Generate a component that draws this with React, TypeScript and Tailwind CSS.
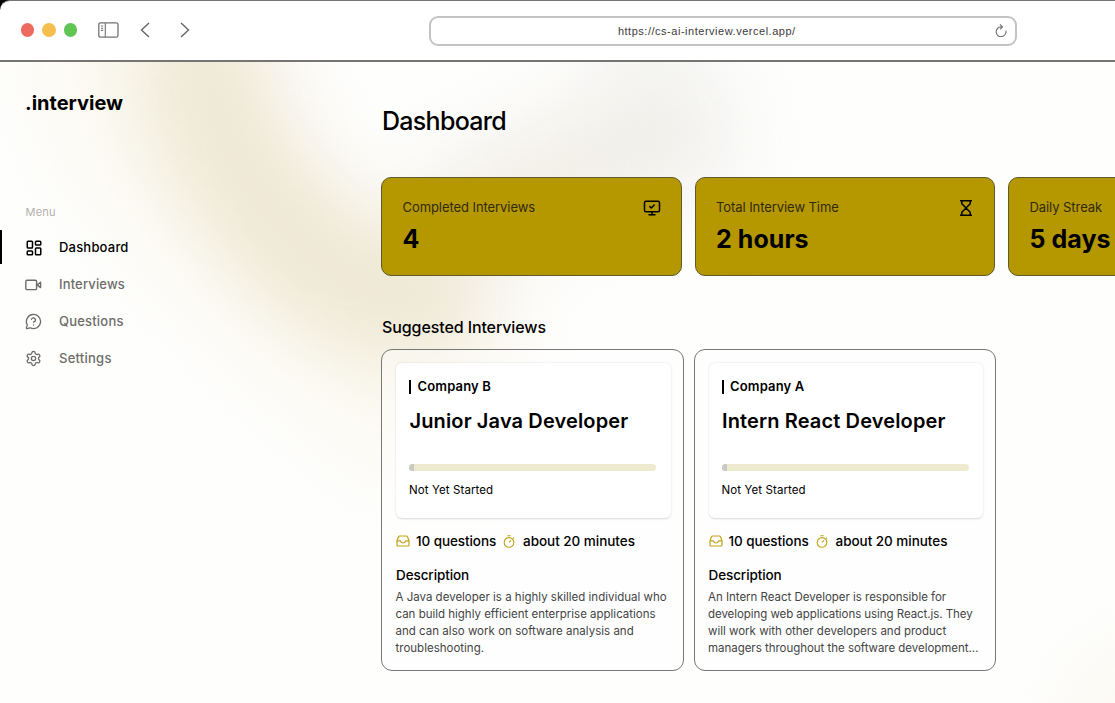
import React from "react";
import { LayoutDashboard, MessageCircleQuestionMark, Settings, MonitorCheck } from "lucide-react";

function VideoIcon() {
  return (
    <svg className="h-4 w-[17px]" viewBox="0 0 17 16" fill="none" stroke="currentColor" strokeWidth="1.4" strokeLinejoin="round">
      <rect x="0.8" y="3.2" width="10.8" height="9.4" rx="1.2" />
      <path d="M12.2 7.9 15.6 5.2v5.4z" strokeWidth="1.4" />
    </svg>
  );
}

function HourglassIcon() {
  return (
    <svg className="mr-px h-[18px] w-3.5" viewBox="0 0 14 18" fill="none" stroke="currentColor" strokeWidth="1.5">
      <path d="M1 1.7h12M1 16.3h12M2.8 1.7v3.1L7 9l4.2-4.2V1.7M2.8 16.3v-3.1L7 9l4.2 4.2v3.1" />
    </svg>
  );
}

function InboxIcon() {
  return (
    <svg className="h-3 w-3.5 text-[#c0a317]" viewBox="0 0 14 12" fill="none" stroke="currentColor" strokeWidth="1.2" strokeLinejoin="round">
      <path d="M1 5.8 2.4 2Q2.8 1 3.8 1h6.4q1 0 1.4 1L13 5.8V10q0 1-1 1H2q-1 0-1-1z" />
      <path d="M1 5.8h3.4Q5 8 7 8t2.6-2.2H13" />
    </svg>
  );
}

function TimerIcon() {
  return (
    <svg className="h-[13px] w-3 text-[#c0a317]" viewBox="0 0 12 13" fill="none" stroke="currentColor" strokeWidth="1.1">
      <circle cx="6" cy="7.4" r="4.8" />
      <path d="M4.3.8h3.4M6 7.4l2-2M10 2.6l.9.9" />
    </svg>
  );
}

function BrowserBar() {
  return (
    <div className="bg-black">
      <header className="flex h-[62px] items-center rounded-tl-[10px] border-t border-b-2 border-t-[#777] border-b-[#777573] bg-white pl-[21px]">
        <div className="flex gap-2 pb-px">
          <span className="size-[13.3px] rounded-full bg-[#ec6a5e]" />
          <span className="size-[13.3px] rounded-full bg-[#f4bf4f]" />
          <span className="size-[13.3px] rounded-full bg-[#61c554]" />
        </div>
        <svg className="mb-[2px] ml-[21.5px] h-4 w-[21px]" viewBox="0 0 21 16" fill="none" stroke="#737373" strokeWidth="1.3">
          <rect x="0.8" y="0.8" width="19.2" height="14.4" rx="1.8" />
          <path d="M7.3 1v14M3 4h2.2M3 6.2h2.2M3 8.4h2.2" strokeWidth="1.1" />
        </svg>
        <svg className="mb-[2px] ml-[21px] h-4 w-[10px]" viewBox="0 0 10 16" fill="none" stroke="#666" strokeWidth="1.4">
          <path d="M9 1 1.5 8 9 15" />
        </svg>
        <svg className="mb-[2px] ml-[29.5px] h-4 w-[10px]" viewBox="0 0 10 16" fill="none" stroke="#666" strokeWidth="1.4">
          <path d="M1 1 8.5 8 1 15" />
        </svg>
        <div className="ml-[239px] flex h-[30px] w-[588px] items-center rounded-[9px] border-2 border-[#c4c2c3] pr-2 pl-[187px] font-['Liberation_Sans',sans-serif] text-[11px] text-[#3c3c3c]">
          <span className="pt-px tracking-[0.52px]">https://cs-ai-interview.vercel.app/</span>
          <svg className="ml-auto h-[13px] w-3" viewBox="0 0 12 13" fill="none" stroke="#777" strokeWidth="1.2">
            <path d="M10.8 6.6A4.9 4.9 0 1 1 6 2.9h1.2M5 .4l2.5 2.5L5 5.4" />
          </svg>
        </div>
      </header>
    </div>
  );
}

function Backdrop() {
  return (
    <div className="pointer-events-none absolute inset-0 overflow-hidden">
      <svg className="absolute inset-0 h-[641px] w-[1115px] overflow-visible blur-[40px]" viewBox="0 0 1115 641" fill="none" strokeLinecap="round">
        <path d="M130 -20 160 60 270 180 420 320" stroke="#fbf9f0" strokeWidth="190" />
        <path d="M205 -10C215 70 245 120 290 170S385 240 430 235" stroke="#eee7d3" strokeWidth="122" />
        <path d="M470 150C550 110 620 90 680 70" stroke="#f0ede4" strokeWidth="100" />
        <path d="M640 -20 680 90" stroke="#eeeeec" strokeOpacity="0.6" strokeWidth="110" />
      </svg>
      <div className="absolute top-[590px] left-[1070px] h-[150px] w-[150px] rounded-full bg-[#faf8ef] blur-[35px]" />
    </div>
  );
}

const nav = [
  { label: "Dashboard", icon: <LayoutDashboard size={18} strokeWidth={2} />, tracking: "tracking-[0.2px]" },
  { label: "Interviews", icon: <VideoIcon />, tracking: "tracking-[0.15px]" },
  { label: "Questions", icon: <MessageCircleQuestionMark size={17} strokeWidth={1.9} />, tracking: "tracking-[0.2px]" },
  { label: "Settings", icon: <Settings size={17} strokeWidth={1.9} />, tracking: "tracking-[0.25px]" },
];

function Sidebar() {
  return (
    <aside className="w-[381px] shrink-0 pt-[29px]">
      <h1 className="pl-[25px] text-[20px] leading-6 font-bold">.interview</h1>
      <p className="mt-[89px] pl-[25.5px] text-[11px] leading-4 tracking-[0.2px] text-[#b2b1ad]">Menu</p>
      <nav className="mt-[10px] flex flex-col gap-[3px]">
        {nav.map((item, i) => (
          <a
            key={item.label}
            className={
              i === 0
                ? "flex h-[34px] items-center border-l-2 border-black pl-[23px] text-black"
                : "flex h-[34px] items-center border-l-2 border-transparent pl-[23px] text-[#6d6c69]"
            }
          >
            <span className="flex w-[34px] items-center pt-px">{item.icon}</span>
            <span className={"pt-px text-[13px] font-medium " + item.tracking}>{item.label}</span>
          </a>
        ))}
      </nav>
    </aside>
  );
}

const stats = [
  { label: "Completed Interviews", value: "4", icon: <MonitorCheck size={18} strokeWidth={2} /> },
  { label: "Total Interview Time", value: "2 hours", icon: <HourglassIcon /> },
  { label: "Daily Streak", value: "5 days", icon: null },
];

const interviews = [
  {
    company: "Company B",
    role: "Junior Java Developer",
    lines: [
      { text: "A Java developer is a highly skilled individual who", tracking: "tracking-normal" },
      { text: "can build highly efficient enterprise applications", tracking: "tracking-[-0.01px]" },
      { text: "and can also work on software analysis and", tracking: "tracking-[0.02px]" },
      { text: "troubleshooting.", tracking: "tracking-normal" },
    ],
  },
  {
    company: "Company A",
    role: "Intern React Developer",
    lines: [
      { text: "An Intern React Developer is responsible for", tracking: "tracking-[-0.02px]" },
      { text: "developing web applications using React.js. They", tracking: "tracking-[-0.06px]" },
      { text: "will work with other developers and product", tracking: "tracking-normal" },
      { text: "managers throughout the software development…", tracking: "tracking-[-0.03px]" },
    ],
  },
];

function InterviewCard({ company, role, lines }: (typeof interviews)[number]) {
  return (
    <article className="h-[321.5px] w-[302.5px] rounded-[11px] border border-[#777] bg-white/40 p-[13px]">
      <div className="ml-px h-[155px] w-[274.5px] rounded-md bg-white px-[13px] pt-[17px] shadow-[0_0.5px_2px_rgba(0,0,0,0.15)]">
        <div className="flex h-[14px] items-center border-l-2 border-black pl-[6.5px] text-[13px] font-semibold tracking-[0.15px]">{company}</div>
        <h3 className="mt-[13px] pl-[0.5px] text-[20px] leading-7 font-semibold tracking-[0.13px] whitespace-nowrap">{role}</h3>
        <div className="mt-[29px] flex h-[7px] w-[247px] overflow-hidden rounded-full bg-[#eeead0]">
          <div className="w-[5px] bg-[#c9c9c5]" />
        </div>
        <p className="mt-[11px] text-[11.5px] leading-4 tracking-[0.1px]">Not Yet Started</p>
      </div>
      <div className="mt-[13px] ml-px flex h-5 items-center text-[13.5px] font-medium whitespace-nowrap">
        <InboxIcon />
        <span className="ml-[6px] w-[87px] tracking-[-0.08px]">10 questions</span>
        <TimerIcon />
        <span className="ml-[8px] tracking-[-0.03px]">about 20 minutes</span>
      </div>
      <h4 className="mt-[14px] ml-px text-[13.5px] leading-5 font-medium tracking-[-0.1px]">Description</h4>
      <div className="mt-[4px] ml-[0.5px] text-[11.5px] leading-[16.9px] whitespace-nowrap text-[#444]">
        {lines.map((l) => (
          <p key={l.text} className={l.tracking}>{l.text}</p>
        ))}
      </div>
    </article>
  );
}

export default function App() {
  return (
    <div className="flex h-[703px] w-[1115px] flex-col overflow-hidden bg-[#fefefd] font-['Inter',sans-serif] text-black">
      <BrowserBar />
      <div className="relative min-h-0 flex-1 overflow-hidden">
        <Backdrop />
        <div className="relative flex">
          <Sidebar />
          <main className="shrink-0 pt-[41px]">
            <h2 className="pl-px text-[25px] leading-9 font-medium tracking-[-0.7px]">Dashboard</h2>
            <div className="mt-[38px] flex gap-[13px]">
              {stats.map((s) => (
                <section key={s.label} className="h-[99px] w-[300.5px] rounded-[10px] border border-[#5f5a2c] bg-[#b59700] px-5 pt-[21px]">
                  <div className="flex h-[18px] items-center justify-between">
                    <span className="pl-[0.5px] text-[13px] tracking-[-0.07px] text-[#302a0b]">{s.label}</span>
                    {s.icon}
                  </div>
                  <p className="mt-[6px] pl-[0.5px] text-[25px] leading-8 font-bold tracking-[0.05px]">{s.value}</p>
                </section>
              ))}
            </div>
            <h2 className="mt-[39px] pl-px text-[16px] leading-6 font-medium tracking-[-0.1px]">Suggested Interviews</h2>
            <div className="mt-[10px] flex gap-[10px]">
              {interviews.map((i) => (
                <InterviewCard key={i.company} {...i} />
              ))}
            </div>
          </main>
        </div>
      </div>
    </div>
  );
}
